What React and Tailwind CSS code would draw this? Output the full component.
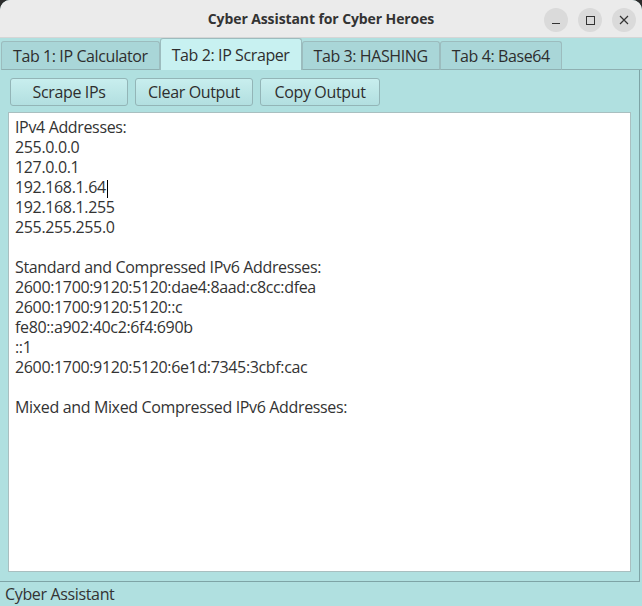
import { useState } from "react";

const tabs = ["Tab 1: IP Calculator", "Tab 2: IP Scraper", "Tab 3: HASHING", "Tab 4: Base64"];

const output = `IPv4 Addresses:
255.0.0.0
127.0.0.1
192.168.1.64
192.168.1.255
255.255.255.0

Standard and Compressed IPv6 Addresses:
2600:1700:9120:5120:dae4:8aad:c8cc:dfea
2600:1700:9120:5120::c
fe80::a902:40c2:6f4:690b
::1
2600:1700:9120:5120:6e1d:7345:3cbf:cac

Mixed and Mixed Compressed IPv6 Addresses:`;

export default function App() {
  const [active, setActive] = useState(1);
  const lines = output.split("\n");

  return (
    <div className="w-[642px] h-[606px] bg-[#2c2c2c] font-['Open_Sans',sans-serif] text-[#2e2e2e]">
      <div className="flex flex-col h-full rounded-t-[10px] overflow-hidden bg-[#b0e0e0]">

        {/* ── Title bar ── */}
        <div className="relative h-[38px] shrink-0 flex items-center justify-center bg-[#ebebeb] border-b border-[#d6d6d6]">
          <span className="text-[14px] font-bold text-[#333] tracking-[-0.1px]">Cyber Assistant for Cyber Heroes</span>
          <div className="absolute right-[6px] top-[8px] flex gap-[10px]">
            <div className="w-[24px] h-[24px] rounded-full bg-[#dadada] flex items-center justify-center">
              <div className="w-[8px] h-[1px] bg-[#333] mt-[6px]"></div>
            </div>
            <div className="w-[24px] h-[24px] rounded-full bg-[#dadada] flex items-center justify-center">
              <div className="w-[9px] h-[9px] border border-[#333]"></div>
            </div>
            <div className="w-[24px] h-[24px] rounded-full bg-[#dadada] flex items-center justify-center">
              <svg width="10" height="10" viewBox="0 0 10 10">
                <path d="M1 1L9 9M9 1L1 9" stroke="#333" strokeWidth="1.2" />
              </svg>
            </div>
          </div>
        </div>

        {/* ── Tabs ── */}
        <div className="flex items-end h-[32px] pl-[1px] shrink-0 tracking-[-0.4px]">
          {tabs.map((t, i) => (
            <button
              key={t}
              onClick={() => setActive(i)}
              className={`px-[11px] text-[16px] leading-none border border-[#9cbcbe] rounded-t-[3px] ${
                active === i
                  ? "h-[32px] bg-[#c8f1f1] border-b-0 pt-[1px]"
                  : "h-[29px] bg-[#a9d6d8] border-b-[#8fb0b2]"
              }`}
            >
              {t}
            </button>
          ))}
          <div className="flex-1 border-b border-[#8fb0b2]"></div>
        </div>

        {/* ── Pane ── */}
        <div className="flex-1 flex flex-col border-r border-b border-[#7ea4a6] mr-[2px] pl-[8px] pr-[8px] pt-[8px] pb-[9px] tracking-[-0.35px]">
          <div className="flex gap-[7px] mb-[6px] pl-[2px]">
            <button className="w-[118px] h-[28px] text-[16px] rounded-[3px] border border-[#93b5b7] bg-gradient-to-b from-[#c8eeee] to-[#b2dfe0]">Scrape IPs</button>
            <button className="w-[118px] h-[28px] text-[16px] rounded-[3px] border border-[#93b5b7] bg-gradient-to-b from-[#c8eeee] to-[#b2dfe0]">Clear Output</button>
            <button className="w-[120px] h-[28px] text-[16px] rounded-[3px] border border-[#93b5b7] bg-gradient-to-b from-[#c8eeee] to-[#b2dfe0]">Copy Output</button>
          </div>
          <div className="flex-1 bg-white border border-[#a9bfc0] pl-[6px] pt-[4px] text-[16px] leading-[20px] text-[#333]">
            {lines.map((l, i) => (
              <div key={i} className="h-[20px]">
                {l}
                {i === 3 && <span className="inline-block w-[1px] h-[18px] bg-black align-middle ml-[1px]"></span>}
              </div>
            ))}
          </div>
        </div>

        {/* ── Status bar ── */}
        <div className="h-[24px] shrink-0 flex items-center pl-[5px] text-[16px] text-[#333] tracking-[-0.35px]">Cyber Assistant</div>
      </div>
    </div>
  );
}
